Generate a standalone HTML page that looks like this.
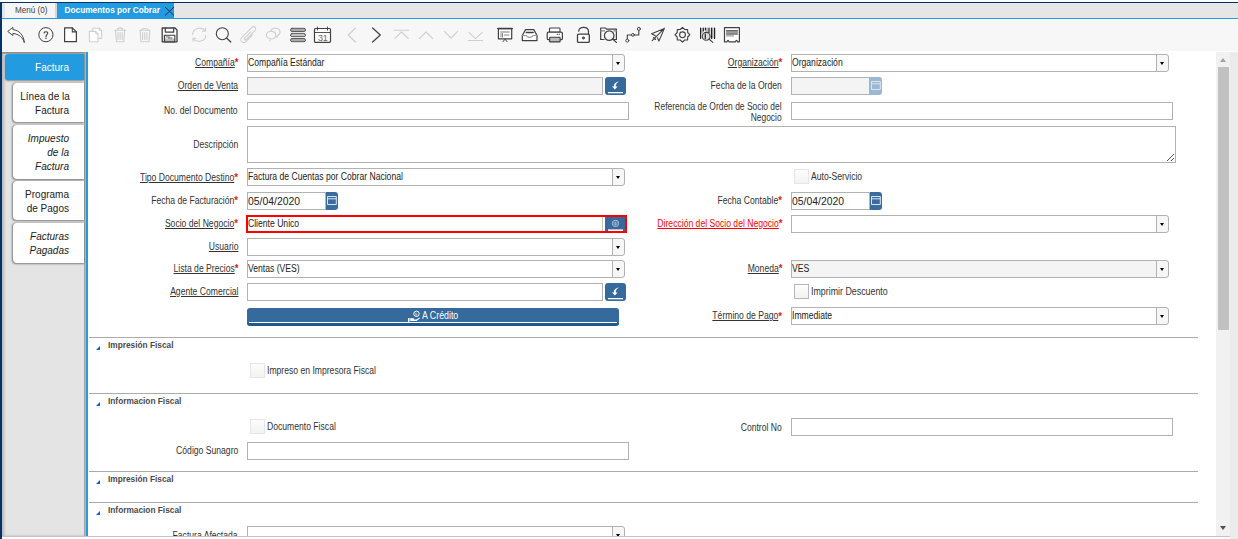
<!DOCTYPE html>
<html><head><meta charset="utf-8"><style>
*{margin:0;padding:0;box-sizing:border-box}
html,body{width:1238px;height:539px;overflow:hidden;background:#fff;font-family:"Liberation Sans",sans-serif}
.a{position:absolute}
.lbl{position:absolute;white-space:nowrap;font-size:10px;line-height:12px;text-align:right;transform:scaleX(0.86);transform-origin:100% 50%}
.ast{color:#f01010;font-size:11px;line-height:0;font-weight:bold;position:relative;top:0.5px;margin-left:0px}
.box{position:absolute;border:1px solid #b2b2b2}
.txt{position:absolute;white-space:nowrap;line-height:12px;transform-origin:0 50%}
.cbtn{position:absolute;width:13px;height:18px;border:1px solid #b2b2b2;border-radius:0 3px 3px 0;background:#f6f6f6}
.cbtn i{position:absolute;left:3px;top:7px;width:0;height:0;border-left:2.8px solid transparent;border-right:2.8px solid transparent;border-top:3.2px solid #000}
.bbtn{position:absolute;width:21px;height:18px;background:#36699c;border-radius:3px}
.dbtn{position:absolute;width:12px;height:18px;border-radius:0 3px 3px 0}
.chk{position:absolute;width:15px;height:15px;border:1px solid #dedede;border-radius:0;background:linear-gradient(#fdfdfd,#f2f2f2)}
.sline{position:absolute;left:89px;width:1109px;height:1px;background:#ababab}
.tri{position:absolute;left:96px;width:0;height:0;border-left:4px solid transparent;border-bottom:4px solid #1060d0}
.shdr{position:absolute;left:108px;font-weight:bold;font-size:8.3px;color:#4a4a4a;line-height:12px;white-space:nowrap}
.ltab{position:absolute;left:13px;width:71px;background:#fff;border-radius:4px 0 0 4px;box-shadow:-0.5px 0.5px 2px rgba(0,0,0,.45);color:#222;display:flex;flex-direction:column;justify-content:center}
.ltab span{display:block;text-align:right;margin-right:15px;font-size:11.5px;line-height:14px;transform:scaleX(0.87);transform-origin:100% 50%;white-space:nowrap}
</style></head>
<body>
<div class="a" style="left:0;top:2px;width:1238px;height:1px;background:#003468"></div>
<div class="a" style="left:0;top:2px;width:2px;height:537px;background:#003468"></div>
<div class="a" style="left:2px;top:3px;width:1236px;height:15px;background:#e6e6e6"></div>
<div class="a" style="left:2px;top:3px;width:54px;height:15px;background:#f5f5f5"></div>
<div class="a" style="left:2px;top:3px;width:3px;height:15px;background:#e6e6e6"></div>
<div class="a" style="left:55px;top:3px;width:2px;height:15px;background:#d6d6d6"></div>
<div class="txt" style="left:14.5px;top:4px;font-size:9px;transform:scaleX(0.9);color:#444">Menú (0)</div>
<div class="a" style="left:57px;top:3px;width:117px;height:15px;background:#229be0"></div>
<div class="txt" style="left:64.5px;top:4px;font-size:8.3px;font-weight:bold;color:#fff">Documentos por Cobrar</div>
<svg class="a" style="left:164px;top:6px" width="11" height="10" viewBox="0 0 11 10"><path d="M1 1L10 9.5M10 1L1 9.5" stroke="#1a3040" stroke-width="0.95"/></svg>
<div class="a" style="left:2px;top:18px;width:1236px;height:1px;background:#229be0"></div>
<div class="a" style="left:2px;top:19px;width:1236px;height:32px;background:#f7f7f7"></div>
<div class="a" style="left:2px;top:52px;width:83px;height:484px;background:#e4e4e4;box-shadow:inset 2px 0 3px rgba(0,0,0,.2)"></div>
<div class="a" style="left:2px;top:52px;width:83px;height:1px;background:#8c8c8c"></div>
<div class="a" style="left:2px;top:53px;width:83px;height:1px;background:#aaa49e"></div>
<div class="a" style="left:84px;top:52px;width:1px;height:484px;background:#a8a29c"></div>
<div class="a" style="left:85px;top:52px;width:1px;height:484px;background:#b8b4b0"></div>
<div class="a" style="left:86px;top:52px;width:2px;height:484px;background:#229be0"></div>
<div class="ltab" style="left:5px;top:54px;width:79px;height:26px;background:#229be0;color:#fff;border-radius:3px 0 0 3px;box-shadow:0 1px 2px rgba(0,0,0,.4)"><span>Factura</span></div>
<div class="ltab" style="top:83px;height:39px"><span>Línea de la</span><span>Factura</span></div>
<div class="ltab" style="top:125px;height:54px;font-style:italic"><span>Impuesto</span><span>de la</span><span>Factura</span></div>
<div class="ltab" style="top:181px;height:39px"><span>Programa</span><span>de Pagos</span></div>
<div class="ltab" style="top:223px;height:40px;font-style:italic"><span>Facturas</span><span>Pagadas</span></div>
<div class="a" style="left:1216px;top:52px;width:14px;height:484px;background:#f1f1f1"></div>
<div class="a" style="left:1230px;top:52px;width:8px;height:487px;background:#ebebeb"></div>
<div class="a" style="left:1218px;top:67px;width:11px;height:263px;background:#c1c1c1"></div>
<div class="a" style="left:1220px;top:58px;width:0;height:0;border-left:3.5px solid transparent;border-right:3.5px solid transparent;border-bottom:4px solid #a3a3a3"></div>
<div class="a" style="left:1220px;top:526px;width:0;height:0;border-left:3.5px solid transparent;border-right:3.5px solid transparent;border-top:4px solid #505050"></div>
<div class="lbl" style="right:1000px;top:56.5px;color:#333"><span style="text-decoration:underline;text-underline-offset:1px">Compañía</span><span class="ast">*</span></div>
<div class="box" style="left:247px;top:54px;width:366px;height:18px;background:#fff"></div>
<div class="cbtn" style="left:612px;top:54px"><i></i></div>
<div class="txt" style="left:248px;top:56.5px;font-size:10px;transform:scaleX(0.86);letter-spacing:0px;color:#222;">Compañía Estándar</div>
<div class="lbl" style="right:1000px;top:79.5px;color:#333"><span style="text-decoration:underline;text-underline-offset:1px">Orden de Venta</span></div>
<div class="box" style="left:247px;top:77px;width:356px;height:18px;background:#f4f4f4"></div>
<div class="bbtn" style="left:605px;top:77px"><svg width="21" height="18" viewBox="0 0 21 18"><path d="M14 4.6C10.2 5.2 8.6 7.4 8.9 9.6L7 9.3L9.8 12.6L12.6 9.6L10.7 9.6C10.6 7.6 11.6 5.8 14 4.6Z" fill="#fff"/><rect x="3" y="15" width="15" height="1.3" fill="#fff"/></svg></div>
<div class="lbl" style="right:1000px;top:104.5px;color:#333">No. del Documento</div>
<div class="box" style="left:247px;top:102px;width:382px;height:18px;background:#fff"></div>
<div class="lbl" style="right:1000px;top:138.5px;color:#333">Descripción</div>
<div class="box" style="left:247px;top:126px;width:929px;height:37px;background:#fff;border-color:#b2b2b2;"></div>
<svg class="a" style="left:1166px;top:153px" width="9" height="9" viewBox="0 0 9 9"><path d="M1 8L8 1M5 8L8 5" stroke="#555" stroke-width="1"/></svg>
<div class="lbl" style="right:1000px;top:171.5px;color:#333"><span style="text-decoration:underline;text-underline-offset:1px">Tipo Documento Destino</span><span class="ast">*</span></div>
<div class="box" style="left:247px;top:168px;width:366px;height:18px;background:#fff"></div>
<div class="cbtn" style="left:612px;top:168px"><i></i></div>
<div class="txt" style="left:248px;top:170.5px;font-size:10px;transform:scaleX(0.86);letter-spacing:0px;color:#222;">Factura de Cuentas por Cobrar Nacional</div>
<div class="lbl" style="right:1000px;top:194.5px;color:#333">Fecha de Facturación<span class="ast">*</span></div>
<div class="box" style="left:247px;top:192px;width:79px;height:18px;background:#fff"></div>
<div class="dbtn" style="left:326px;top:192px;background:#3a6c9e"><svg width="12" height="18" viewBox="0 0 12 18"><path d="M1.5 4.5V12.5H10.3V4.5Z" fill="none" stroke="#dbe6f2" stroke-width="1"/><path d="M1.5 6.8H10.3" stroke="#dbe6f2" stroke-width="1"/></svg></div>
<div class="txt" style="left:248px;top:194.5px;font-size:11px;transform:scaleX(0.945);letter-spacing:0px;color:#222;">05/04/2020</div>
<div class="lbl" style="right:1000px;top:217.5px;color:#333"><span style="text-decoration:underline;text-underline-offset:1px">Socio del Negocio</span><span class="ast">*</span></div>
<div class="a" style="left:246px;top:215px;width:381px;height:18px;border:2px solid #f00;background:#fff"></div>
<div class="a" style="left:602px;top:217px;width:1px;height:14px;background:#c8c8c8"></div>
<div class="a" style="left:605px;top:217px;width:20px;height:14px;background:#36699c"><svg width="20" height="14" viewBox="0 0 20 14"><circle cx="10.5" cy="6.4" r="3.2" fill="none" stroke="#a8c0d8" stroke-width="1"/><path d="M9 4.5V7.5C9 8.5 12 8.5 12 7.5V4.5M10.5 4.5V8" fill="none" stroke="#a8c0d8" stroke-width="0.8"/><rect x="3" y="12.4" width="15" height="1.6" fill="#fff"/></svg></div>
<div class="txt" style="left:248px;top:217.5px;font-size:10px;transform:scaleX(0.86);letter-spacing:0px;color:#222;">Cliente Unico</div>
<div class="lbl" style="right:1000px;top:240.5px;color:#333"><span style="text-decoration:underline;text-underline-offset:1px">Usuario</span></div>
<div class="box" style="left:247px;top:238px;width:366px;height:18px;background:#fff"></div>
<div class="cbtn" style="left:612px;top:238px"><i></i></div>
<div class="lbl" style="right:1000px;top:262.5px;color:#333"><span style="text-decoration:underline;text-underline-offset:1px">Lista de Precios</span><span class="ast">*</span></div>
<div class="box" style="left:247px;top:260px;width:366px;height:18px;background:#fff"></div>
<div class="cbtn" style="left:612px;top:260px"><i></i></div>
<div class="txt" style="left:248px;top:262.5px;font-size:10px;transform:scaleX(0.86);letter-spacing:0px;color:#222;">Ventas (VES)</div>
<div class="lbl" style="right:1000px;top:285.5px;color:#333"><span style="text-decoration:underline;text-underline-offset:1px">Agente Comercial</span></div>
<div class="box" style="left:247px;top:283px;width:356px;height:18px;background:#fff"></div>
<div class="bbtn" style="left:605px;top:283px"><svg width="21" height="18" viewBox="0 0 21 18"><path d="M14 4.6C10.2 5.2 8.6 7.4 8.9 9.6L7 9.3L9.8 12.6L12.6 9.6L10.7 9.6C10.6 7.6 11.6 5.8 14 4.6Z" fill="#fff"/><rect x="3" y="15" width="15" height="1.3" fill="#fff"/></svg></div>
<div class="a" style="left:247px;top:308px;width:372px;height:18px;background:#36699c;border-radius:3px;border-bottom:3px solid #1f5a8e"></div>
<div class="a" style="left:249px;top:322px;width:368px;height:1px;background:#fff"></div>
<svg class="a" style="left:407px;top:310px" width="14" height="13" viewBox="0 0 14 13"><circle cx="9.5" cy="3.8" r="2.7" fill="none" stroke="#fff" stroke-width="1"/><path d="M9 2.5v2.5h1.3" stroke="#fff" stroke-width="0.7" fill="none"/><path d="M1 8h1.6v3.8H1z M3.2 8.3h3.3c.8 0 1 .9.3 1.1h2.3l3.2-1.6c.6-.2.9.3.5.7l-3.3 2.6H3.2z" fill="#fff"/></svg>
<div class="txt" style="left:422px;top:309.0px;font-size:10.5px;transform:scaleX(0.84);letter-spacing:0px;color:#fff;">A Crédito</div>
<div class="lbl" style="right:456px;top:56.5px;color:#333"><span style="text-decoration:underline;text-underline-offset:1px">Organización</span><span class="ast">*</span></div>
<div class="box" style="left:791px;top:54px;width:366px;height:18px;background:#fff"></div>
<div class="cbtn" style="left:1156px;top:54px"><i></i></div>
<div class="txt" style="left:792px;top:56.5px;font-size:10px;transform:scaleX(0.86);letter-spacing:0px;color:#222;">Organización</div>
<div class="lbl" style="right:456px;top:79.5px;color:#333">Fecha de la Orden</div>
<div class="box" style="left:791px;top:77px;width:79px;height:18px;background:#f4f4f4"></div>
<div class="dbtn" style="left:870px;top:77px;background:#9bb7d3"><svg width="12" height="18" viewBox="0 0 12 18"><path d="M1.5 4.5V12.5H10.3V4.5Z" fill="none" stroke="#dbe6f2" stroke-width="1"/><path d="M1.5 6.8H10.3" stroke="#dbe6f2" stroke-width="1"/></svg></div>
<div class="lbl" style="right:456px;top:100.5px;line-height:11px;color:#333;transform:scaleX(0.845)">Referencia de Orden de Socio del<br>Negocio</div>
<div class="box" style="left:791px;top:102px;width:382px;height:18px;background:#fff"></div>
<div class="chk" style="left:794px;top:169px;border-color:#e6e6e6;"></div>
<div class="txt" style="left:811px;top:170.5px;font-size:10px;transform:scaleX(0.86);letter-spacing:0px;color:#333;">Auto-Servicio</div>
<div class="lbl" style="right:456px;top:194.5px;color:#333">Fecha Contable<span class="ast">*</span></div>
<div class="box" style="left:791px;top:192px;width:79px;height:18px;background:#fff"></div>
<div class="dbtn" style="left:870px;top:192px;background:#3a6c9e"><svg width="12" height="18" viewBox="0 0 12 18"><path d="M1.5 4.5V12.5H10.3V4.5Z" fill="none" stroke="#dbe6f2" stroke-width="1"/><path d="M1.5 6.8H10.3" stroke="#dbe6f2" stroke-width="1"/></svg></div>
<div class="txt" style="left:792px;top:194.5px;font-size:11px;transform:scaleX(0.945);letter-spacing:0px;color:#222;">05/04/2020</div>
<div class="lbl" style="right:456px;top:217.5px;color:#f00"><span style="text-decoration:underline;text-underline-offset:1px">Dirección del Socio del Negocio</span><span class="ast">*</span></div>
<div class="box" style="left:791px;top:215px;width:366px;height:18px;background:#fff"></div>
<div class="cbtn" style="left:1156px;top:215px"><i></i></div>
<div class="lbl" style="right:456px;top:262.5px;color:#333"><span style="text-decoration:underline;text-underline-offset:1px">Moneda</span><span class="ast">*</span></div>
<div class="box" style="left:791px;top:260px;width:366px;height:18px;background:#f4f4f4"></div>
<div class="cbtn" style="left:1156px;top:260px"><i></i></div>
<div class="txt" style="left:792px;top:262.5px;font-size:10px;transform:scaleX(0.86);letter-spacing:0px;color:#222;">VES</div>
<div class="chk" style="left:794px;top:284px;border-color:#b8b8b8;"></div>
<div class="txt" style="left:811px;top:285.5px;font-size:10px;transform:scaleX(0.885);letter-spacing:0px;color:#333;">Imprimir Descuento</div>
<div class="lbl" style="right:456px;top:310.0px;color:#333"><span style="text-decoration:underline;text-underline-offset:1px">Término de Pago</span><span class="ast">*</span></div>
<div class="box" style="left:791px;top:307px;width:366px;height:18px;background:#fff"></div>
<div class="cbtn" style="left:1156px;top:307px"><i></i></div>
<div class="txt" style="left:792px;top:309.5px;font-size:10px;transform:scaleX(0.86);letter-spacing:0px;color:#222;">Immediate</div>
<div class="sline" style="top:337px"></div>
<div class="tri" style="top:346px"></div>
<div class="shdr" style="top:339px">Impresión Fiscal</div>
<div class="chk" style="left:250px;top:363px;border-color:#e6e6e6;width:15px;height:15px;"></div>
<div class="txt" style="left:267px;top:364.5px;font-size:10px;transform:scaleX(0.86);letter-spacing:0px;color:#333;">Impreso en Impresora Fiscal</div>
<div class="sline" style="top:393px"></div>
<div class="tri" style="top:402px"></div>
<div class="shdr" style="top:395px">Informacion Fiscal</div>
<div class="chk" style="left:250px;top:419px;border-color:#e6e6e6;width:15px;height:15px;"></div>
<div class="txt" style="left:267px;top:420.5px;font-size:10px;transform:scaleX(0.86);letter-spacing:0px;color:#333;">Documento Fiscal</div>
<div class="lbl" style="right:456px;top:421.5px;color:#333">Control No</div>
<div class="box" style="left:791px;top:418px;width:382px;height:18px;background:#fff"></div>
<div class="lbl" style="right:1000px;top:444.5px;color:#333">Código Sunagro</div>
<div class="box" style="left:247px;top:442px;width:382px;height:18px;background:#fff"></div>
<div class="sline" style="top:471px"></div>
<div class="tri" style="top:480px"></div>
<div class="shdr" style="top:473px">Impresión Fiscal</div>
<div class="sline" style="top:502px"></div>
<div class="tri" style="top:511px"></div>
<div class="shdr" style="top:504px">Informacion Fiscal</div>
<div class="lbl" style="right:1000px;top:529.5px;color:#333">Factura Afectada</div>
<div class="box" style="left:247px;top:526px;width:366px;height:18px;background:#fff"></div>
<div class="cbtn" style="left:612px;top:526px"><i></i></div>
<div class="a" style="left:2px;top:536px;width:1228px;height:1px;background:#c4c4c4"></div>
<div class="a" style="left:2px;top:537px;width:1228px;height:2px;background:#fff"></div>
<svg class="a" style="left:0;top:0" width="760" height="52" viewBox="0 0 760 52" fill="none" stroke-linecap="round" stroke-linejoin="round">
<g stroke="#404040" stroke-width="1.05">
<!-- undo -->
<path d="M8 31.2L12.9 27.3V29.6C18.8 30.2 23.8 34.8 24.3 42.7C23.2 37.6 18.8 34 12.9 33.4V35.1Z" fill="#fff" stroke-width="0.95"/>
<!-- help -->
<path d="M45.9 27.6A7.1 7.1 0 1 1 45.9 41.8A7.1 7.1 0 1 1 45.9 27.6Z" stroke-width="1" stroke-linecap="butt"/>
<path d="M44.2 32.9C44.2 31.3 47.8 31.2 47.8 33.1C47.8 34.4 46.1 34.6 46 36.6" stroke-width="1.1"/>
<circle cx="46" cy="38.3" r="0.7" fill="#333" stroke="none"/>
<!-- new -->
<path d="M64.6 27.8H72.3L76.4 31.9V41.7H64.6Z" fill="#fff" stroke-width="1.2"/>
<path d="M72.3 27.8V31.9H76.4" stroke-width="1.1"/>
<!-- save -->
<path d="M162.2 28H175L177 30V41.8H162.2Z" fill="#fff" stroke-width="1.3"/>
<path d="M165.3 28V32.1H173.7V28" stroke-width="1.2"/>
<rect x="164.4" y="35.3" width="10.4" height="6.5" fill="#bbb" stroke-width="1.2"/>
<path d="M165.5 35.8H174.2V38.6H165.5Z" fill="#fff" stroke="none"/>
<path d="M166.5 37H169.5M168.5 38H172" stroke-width="0.8"/>
<!-- search -->
<circle cx="222.3" cy="33.7" r="6" stroke-width="1.1"/>
<path d="M226.6 38L230.8 42" stroke-width="1.2"/>
<!-- grid toggle -->
<rect x="290.5" y="28.3" width="15" height="3.2" rx="1.6" fill="#aaa" stroke="#555" stroke-width="0.95"/>
<rect x="290.5" y="33.4" width="15" height="3.2" rx="1.6" fill="#c4c4c4" stroke="#555" stroke-width="0.95"/>
<rect x="290.5" y="38.5" width="15" height="3.2" rx="1.6" fill="#aaa" stroke="#555" stroke-width="0.95"/>
<!-- calendar -->
<rect x="314.5" y="28.5" width="16" height="13.8" rx="1" fill="#fff" stroke-width="1.2"/>
<path d="M314.5 32.5H330.5M317.4 27V30.2M327.5 27V30.2" stroke-width="0.9"/>
<!-- next -->
<path d="M372.6 28L380.3 35L372.6 42" stroke-width="1.2"/>
<!-- report -->
<rect x="498.4" y="28.6" width="13.3" height="10.2" fill="#fff" stroke-width="1.2"/>
<path d="M497.8 28.5H512.3" stroke-width="1.4"/>
<path d="M503 41.6L505 39.2L507 41.6" stroke-width="1"/>
<rect x="500.3" y="31" width="9.4" height="2" fill="#bbb" stroke="none"/>
<path d="M501 33.5V37M502.5 33.5V37M504.2 35H509" stroke="#888" stroke-width="1"/>
<!-- archive -->
<path d="M522.3 40.6V35.5L525.6 29.6H533.8L537 35.5V40.6Z" fill="#fff" stroke-width="1.2"/>
<path d="M522.3 35.5H526.5C527 38 532.5 38 533 35.5H537" stroke="#999" stroke-width="1.1"/>
<path d="M526.3 32.5H533.2" stroke-width="1.4"/>
<!-- print -->
<rect x="549.5" y="28" width="10.5" height="4.2" rx="0.8" fill="#fff" stroke-width="1.1"/>
<rect x="547.2" y="32.2" width="15.2" height="7.5" rx="1.3" fill="#fff" stroke-width="1.2"/>
<rect x="549.6" y="37.3" width="10.5" height="4.6" rx="0.5" fill="#bbb" stroke-width="1.1"/>
<path d="M557.2 34.2H557.6M559.1 34.2H559.5" stroke-width="1.1"/>
<!-- lock -->
<rect x="577.5" y="34.2" width="11.8" height="8.2" rx="1" fill="#fff" stroke-width="1.3"/>
<path d="M578.7 31.2C578.7 26 588.5 26 588.5 31.4V34" stroke-width="1.2"/>
<circle cx="583.4" cy="38" r="1.1" fill="#555" stroke-width="0.8"/>
<!-- zoom folder -->
<path d="M600.7 39.5V28H605.6L606.5 29.2H616.4V39.5H613" stroke-width="1.2"/>
<path d="M600.7 30.9H604.5M614 30.9H616.4" stroke="#888" stroke-width="1.2"/>
<path d="M600.7 39.5H604" stroke-width="1.2"/>
<circle cx="609.2" cy="35.6" r="4.8" stroke-width="1.2"/>
<path d="M612.6 39L616.5 42.5" stroke-width="1.1"/>
<!-- workflow -->
<path d="M627.3 39.2V35H631.5M634.3 35H638.8V30.4" stroke-width="1.1"/>
<circle cx="627.3" cy="40.6" r="1.5" fill="#fff" stroke-width="1"/>
<circle cx="632.9" cy="34.9" r="1.4" fill="#fff" stroke-width="1"/>
<circle cx="638.9" cy="28.9" r="1.5" fill="#fff" stroke-width="1"/>
<!-- send -->
<path d="M664.4 28.4L651.6 33.8L655.3 35.8M664.4 28.4L658.9 41.1L657.5 37.7M664.4 28.4L652.2 40.6M653.5 37.5L655.7 39.5" stroke-width="1.1"/>
<!-- gear -->
<path d="M682.5 27.4L684.7 29.5L687.6 29.6L687.7 32.5L689.9 34.8L687.7 37L687.6 39.9L684.7 40L682.5 42.2L680.2 40L677.3 39.9L677.2 37L675 34.8L677.2 32.5L677.3 29.6L680.2 29.5Z" stroke-width="1.1"/>
<circle cx="682.5" cy="34.8" r="2.9" stroke-width="1.1"/>
<!-- barcode -->
<path d="M700.6 28V38.5M703.3 28V31M705.4 28V30M709 28V33M711.5 28V38.5M714.6 28V38.5" stroke="#222" stroke-width="1.2"/>
<path d="M702 28.5V33M707 28V32M712.8 28V38" stroke="#888" stroke-width="1.1"/>
<circle cx="706.2" cy="36.3" r="3.9" fill="#ddd" stroke-width="1.1"/>
<path d="M705.3 34V38.5" stroke="#222" stroke-width="1.2"/>
<path d="M708.9 39L712.8 42.3" stroke-width="1.1"/>
<!-- receipt -->
<path d="M724.5 27.6H739.4V41.8H737.5C737 40 736 40 735.5 41.8H729C728.5 40 727.5 40 727 41.8H724.5Z" fill="#fff" stroke-width="1.2"/>
<path d="M726.5 30.5H737.5M726.5 31.8H737.5M726.5 33H737.5" stroke="#666" stroke-width="1"/>
<path d="M726.5 34.1H737.5" stroke="#444" stroke-width="1"/>
<path d="M726.5 35.9H733.5" stroke="#777" stroke-width="0.9"/>
</g>
<!-- disabled -->
<g stroke="#cfcfcf" stroke-width="1.1">
<!-- copy -->
<path d="M92.8 31V28.2H99.2L101.6 30.6V38.4H98.5" fill="#fff"/>
<path d="M89.4 31.4H95.6L98 33.8V41.8H89.4Z" fill="#fff"/>
<path d="M95.6 31.4V33.8H98M99.2 28.2V30.6H101.6" stroke-width="0.9"/>
<!-- trash -->
<path d="M114.6 30.2H125.6M117.2 30C117.6 27.2 122.6 27.2 123 30M115.6 30.5L116.4 41.8H123.8L124.6 30.5M118 32.5V39.5M120.1 32.5V39.5M122.2 32.5V39.5"/>
<path d="M139.8 30.2H149.8M141.5 30C142 28 147.8 28 148.2 30M140.2 30.5L140.9 41.8H149.1L149.8 30.5M142.6 32.5V39.5M144.8 32.5V39.5M147 32.5V39.5"/>
<!-- refresh -->
<path d="M192.6 34.5C192.6 28 201.5 26 205.3 30.8M205.8 35.2C205.8 41.5 197 43.2 193.2 38.8M205.5 28.2V31.2H202.5M193 41.2V38.3H196"/>
<!-- attach -->
<path transform="translate(248.4 35) rotate(45) scale(1.12)" d="M2.6 -2.5V5.8A2.6 2.6 0 0 1 -2.6 5.8V-7A2 2 0 0 1 1.4 -7V4.3A0.9 0.9 0 0 1 -0.4 4.3V-3.5" stroke-width="0.95"/>
<!-- chat -->
<path d="M269.8 41.2L270.4 38.8C266.5 38 265.3 34.8 267.2 32.8C269.5 30.3 275 31 275.8 34.3C276.5 37.5 273 39.5 270.6 38.8"/>
<path d="M270.8 31.3C271.5 27.6 278.5 27 279.8 30.6C280.6 33 279 35.6 276 36.2L277.3 37.5"/>
<!-- prev -->
<path d="M355.5 28L348.3 35L355.5 42" stroke-width="1.2"/>
<!-- first/up/down/last -->
<path d="M394.3 30.2H408.6M394.8 38.4L401.5 32L408.2 38.4"/>
<path d="M419.3 38.7L426 32L432.7 38.7"/>
<path d="M444.3 31.3L451 38L457.7 31.3"/>
<path d="M468.3 40.5H482.6M468.8 32.3L475.5 38.7L482.2 32.3"/>
</g>
<text x="318" y="40.8" font-family="Liberation Sans" font-size="9" fill="#666" letter-spacing="-0.3">31</text>
</svg>

</body></html>
